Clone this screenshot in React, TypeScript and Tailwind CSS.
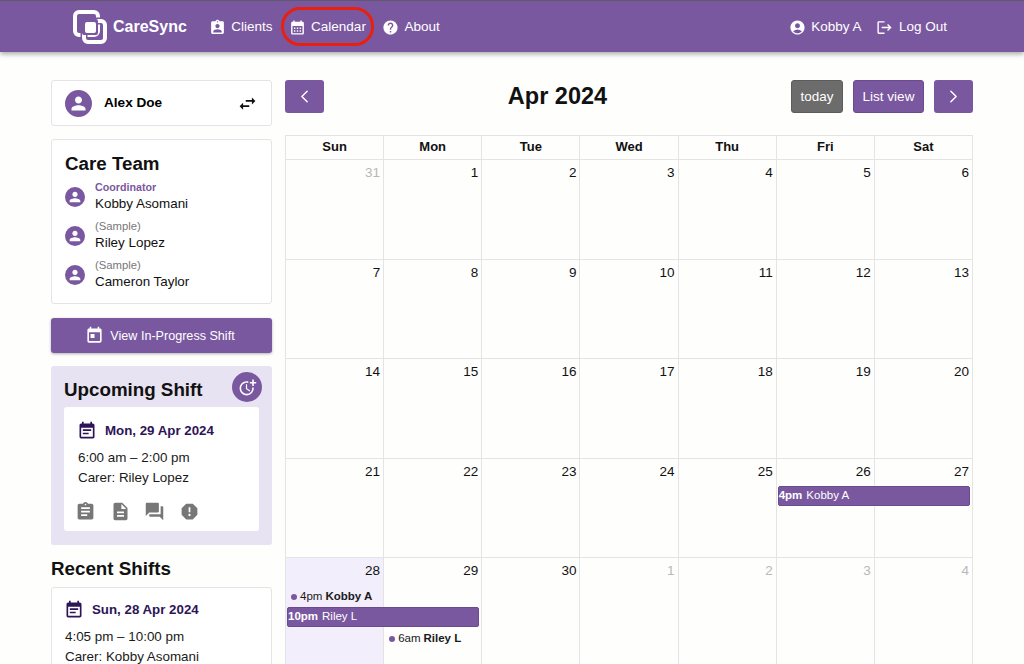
import React from 'react';
import { ChevronLeft, ChevronRight } from 'lucide-react';
import {
  MdAccountCircle,
  MdAssignment,
  MdAssignmentInd,
  MdCalendarMonth,
  MdDescription,
  MdEventNote,
  MdForum,
  MdHelp,
  MdLogout,
  MdMoreTime,
  MdPerson,
  MdReport,
  MdSwapHoriz,
  MdToday,
} from 'react-icons/md';

const days = ['Sun', 'Mon', 'Tue', 'Wed', 'Thu', 'Fri', 'Sat'];

const weeks = [
  [31, 1, 2, 3, 4, 5, 6],
  [7, 8, 9, 10, 11, 12, 13],
  [14, 15, 16, 17, 18, 19, 20],
  [21, 22, 23, 24, 25, 26, 27],
  [28, 29, 30, 1, 2, 3, 4],
];

const team = [
  { role: 'Coordinator', name: 'Kobby Asomani', accent: true },
  { role: '(Sample)', name: 'Riley Lopez', accent: false },
  { role: '(Sample)', name: 'Cameron Taylor', accent: false },
];

const colStart = [
  'col-start-1',
  'col-start-2',
  'col-start-3',
  'col-start-4',
  'col-start-5',
  'col-start-6',
  'col-start-7',
];

function Logo() {
  return (
    <svg width="34" height="34" viewBox="0 0 34 34" fill="none" className="shrink-0">
      <rect x="2" y="2" width="23" height="23" rx="4" stroke="white" strokeWidth="4" />
      <rect x="11" y="11" width="21" height="21" rx="4" stroke="#7a589f" strokeWidth="7" />
      <rect x="11" y="11" width="21" height="21" rx="4" stroke="white" strokeWidth="4" />
      <rect x="9" y="9" width="16" height="16" rx="2" fill="#7a589f" />
      <rect x="12" y="12" width="11" height="11" rx="2" fill="white" />
    </svg>
  );
}

function NavItem({ icon, label }: { icon: React.ReactNode; label: string }) {
  return (
    <div className="flex items-center gap-[5.5px] pt-px text-[13.5px] text-white">
      {icon}
      <span>{label}</span>
    </div>
  );
}

function Header() {
  return (
    <header className="relative flex h-[52px] items-center border-t border-[#5e5a6a] bg-[#7a589f] pl-[73px] pr-[77px] shadow-[0_2px_5px_rgba(0,0,0,0.35)]">
      <Logo />
      <span className="ml-[6px] pt-px text-[16px] font-bold text-white">CareSync</span>
      <div className="ml-[22px] flex items-center gap-[16px]">
        <NavItem icon={<MdAssignmentInd size={17} />} label="Clients" />
        <NavItem icon={<MdCalendarMonth size={17} />} label="Calendar" />
        <NavItem icon={<MdHelp size={17} />} label="About" />
      </div>
      <div className="ml-auto flex items-center gap-[15px]">
        <NavItem icon={<MdAccountCircle size={17} />} label="Kobby A" />
        <NavItem icon={<MdLogout size={17} />} label="Log Out" />
      </div>
      {/* red annotation around Calendar */}
      <div className="absolute left-[281px] top-[6px] h-[39px] w-[93px] rounded-[19px] border-[3px] border-[#e8200f]" />
    </header>
  );
}

function Avatar({ size }: { size: 'lg' | 'sm' }) {
  return (
    <div
      className={
        size === 'lg'
          ? 'flex h-[27px] w-[27px] shrink-0 items-center justify-center rounded-full bg-[#7a589f] text-white'
          : 'flex h-[20px] w-[20px] shrink-0 items-center justify-center rounded-full bg-[#7a589f] text-white'
      }
    >
      <MdPerson size={size === 'lg' ? 21 : 16} />
    </div>
  );
}

function ShiftCard({ date, time, carer }: { date: string; time: string; carer: string }) {
  return (
    <>
      <div className="flex items-center gap-[8px]">
        <MdEventNote size={20} className="text-[#2d1457]" />
        <span className="text-[13.3px] font-bold text-[#2d1457]">{date}</span>
      </div>
      <div className="ml-px mt-[7px] text-[13.4px] leading-[20px] text-[#1a1a1a]">{time}</div>
      <div className="ml-px text-[13.4px] leading-[20px] text-[#1a1a1a]">{carer}</div>
    </>
  );
}

function Sidebar() {
  return (
    <aside className="flex w-[221px] shrink-0 flex-col">
      <div className="flex h-[46px] items-center rounded-[3px] border border-[#e4e4e4] bg-white pl-[13px] pr-[13px]">
        <Avatar size="lg" />
        <span className="ml-[12px] text-[13.6px] font-bold text-black">Alex Doe</span>
        <MdSwapHoriz size={21} className="ml-auto text-[#111]" />
      </div>

      <div className="mt-[13px] h-[165px] rounded-[3px] border border-[#e4e4e4] bg-white pl-[13px] pt-[12px]">
        <div className="text-[18.75px] font-bold leading-[24px] text-[#111]">Care Team</div>
        <div className="mt-[5px] flex flex-col gap-[7px]">
          {team.map((p) => (
            <div key={p.name} className="flex items-center">
              <Avatar size="sm" />
              <div className="ml-[10px]">
                <div
                  className={
                    p.accent
                      ? 'text-[10.7px] font-bold leading-[13px] text-[#7a589f]'
                      : 'text-[11.3px] leading-[13px] text-[#777]'
                  }
                >
                  {p.role}
                </div>
                <div className="text-[13.4px] leading-[19px] text-[#111]">{p.name}</div>
              </div>
            </div>
          ))}
        </div>
      </div>

      <div className="mt-[14px] flex h-[35px] items-center justify-center gap-[6px] rounded-[3px] bg-[#7a589f] pr-[3px] text-[12.6px] text-white shadow-[0_1px_3px_rgba(0,0,0,0.3)]">
        <MdToday size={19} />
        <span className="pt-px">View In-Progress Shift</span>
      </div>

      <div className="relative mt-[13px] h-[179px] rounded-[3px] bg-[#e8e3f2] px-[13px] pt-[12px]">
        <div className="text-[18.75px] font-bold leading-[24px] text-[#111]">Upcoming Shift</div>
        <div className="absolute right-[10px] top-[6px] flex h-[30px] w-[30px] items-center justify-center rounded-full bg-[#7a589f] text-white">
          <MdMoreTime size={19} />
        </div>
        <div className="mt-[5px] h-[124px] rounded-[3px] bg-white pl-[13px] pt-[14px]">
          <ShiftCard date="Mon, 29 Apr 2024" time="6:00 am – 2:00 pm" carer="Carer: Riley Lopez" />
          <div className="-ml-[2px] mt-[13px] flex gap-[13.5px] text-[#777]">
            <MdAssignment size={21} />
            <MdDescription size={21} />
            <MdForum size={21} />
            <MdReport size={21} />
          </div>
        </div>
      </div>

      <div className="mt-[12px] text-[18.75px] font-bold leading-[24px] text-[#111]">Recent Shifts</div>
      <div className="mt-[6px] h-[90px] rounded-[3px] border border-[#e4e4e4] bg-white pl-[12px] pt-[12px]">
        <ShiftCard date="Sun, 28 Apr 2024" time="4:05 pm – 10:00 pm" carer="Carer: Kobby Asomani" />
      </div>
    </aside>
  );
}

function Dot({ time, name }: { time: string; name: string }) {
  return (
    <div className="flex h-[21px] items-center pl-[5px] text-[11.5px] text-[#1a1a1a]">
      <span className="mr-[3px] h-[6px] w-[6px] rounded-full bg-[#7a589f]" />
      <span>{time}</span>
      <span className="ml-[3px] font-bold">{name}</span>
    </div>
  );
}

function Bar({ time, name, className }: { time: string; name: string; className: string }) {
  return (
    <div
      className={`${className} row-start-1 z-10 flex h-[20px] items-center self-start rounded-[2px] border border-[#6b4a92] bg-[#7a589f] text-[11.5px] text-white`}
    >
      <span className="font-bold">{time}</span>
      <span className="ml-[4px]">{name}</span>
    </div>
  );
}

function Calendar() {
  return (
    <main className="min-w-0 flex-1">
      <div className="flex h-[33px] items-center">
        <div className="flex h-[33px] w-[39px] items-center justify-center rounded-[3px] bg-[#7a589f] text-white">
          <ChevronLeft size={21} strokeWidth={1.7} />
        </div>
        <div className="flex-1 pt-px text-center text-[23.5px] font-bold text-[#111]">Apr 2024</div>
        <div className="flex h-[33px] w-[52px] items-center justify-center rounded-[3px] border border-[#5c5c5c] bg-[#6c6c6c] pt-px text-[13.4px] text-white">
          today
        </div>
        <div className="ml-[10px] flex h-[33px] w-[71px] items-center justify-center rounded-[3px] border border-[#6b4a92] bg-[#7a589f] pt-px text-[13.5px] text-white">
          List view
        </div>
        <div className="ml-[10px] flex h-[33px] w-[39px] items-center justify-center rounded-[3px] bg-[#7a589f] text-white">
          <ChevronRight size={21} strokeWidth={1.7} />
        </div>
      </div>

      <div className="mt-[22px] border-l border-t border-[#e4e4e4]">
        <div className="grid h-[24px] grid-cols-7 border-b border-[#e4e4e4]">
          {days.map((d) => (
            <div
              key={d}
              className="flex items-center justify-center border-r border-[#e4e4e4] pb-[2px] text-[13px] font-bold text-[#111]"
            >
              {d}
            </div>
          ))}
        </div>
        {weeks.map((week, w) => (
          <div
            key={w}
            className={`grid grid-cols-7 grid-rows-1 border-b border-[#e4e4e4] ${w === 4 ? 'h-[120px]' : 'h-[99.5px]'}`}
          >
            {week.map((n, i) => {
              const muted = (w === 0 && i === 0) || (w === 4 && i > 2);
              const today = w === 4 && i === 0;
              return (
                <div
                  key={i}
                  className={`${colStart[i]} row-start-1 border-r border-[#e4e4e4] pr-[3px] pt-[4px] ${
                    today ? 'bg-[#f3eefb]' : ''
                  }`}
                >
                  <div className={`text-right text-[13.5px] leading-[17px] ${muted ? 'text-[#b8b8b8]' : 'text-[#111]'}`}>
                    {n}
                  </div>
                  {w === 4 && i === 0 && (
                    <div className="mt-[7px]">
                      <Dot time="4pm" name="Kobby A" />
                    </div>
                  )}
                  {w === 4 && i === 1 && (
                    <div className="mt-[49px]">
                      <Dot time="6am" name="Riley L" />
                    </div>
                  )}
                </div>
              );
            })}
            {w === 3 && <Bar time="4pm" name="Kobby A" className="col-start-6 col-span-2 ml-[1px] mr-[3px] mt-[27.5px]" />}
            {w === 4 && <Bar time="10pm" name="Riley L" className="col-start-1 col-span-2 ml-[1px] mr-[3px] mt-[49px]" />}
          </div>
        ))}
      </div>
    </main>
  );
}

export default function App() {
  return (
    <div className="h-[664px] overflow-hidden bg-[#fefefd] font-['Liberation_Sans',Arial,sans-serif]">
      <Header />
      <div className="flex gap-[13px] pl-[51px] pr-[51px] pt-[28px]">
        <Sidebar />
        <Calendar />
      </div>
    </div>
  );
}
